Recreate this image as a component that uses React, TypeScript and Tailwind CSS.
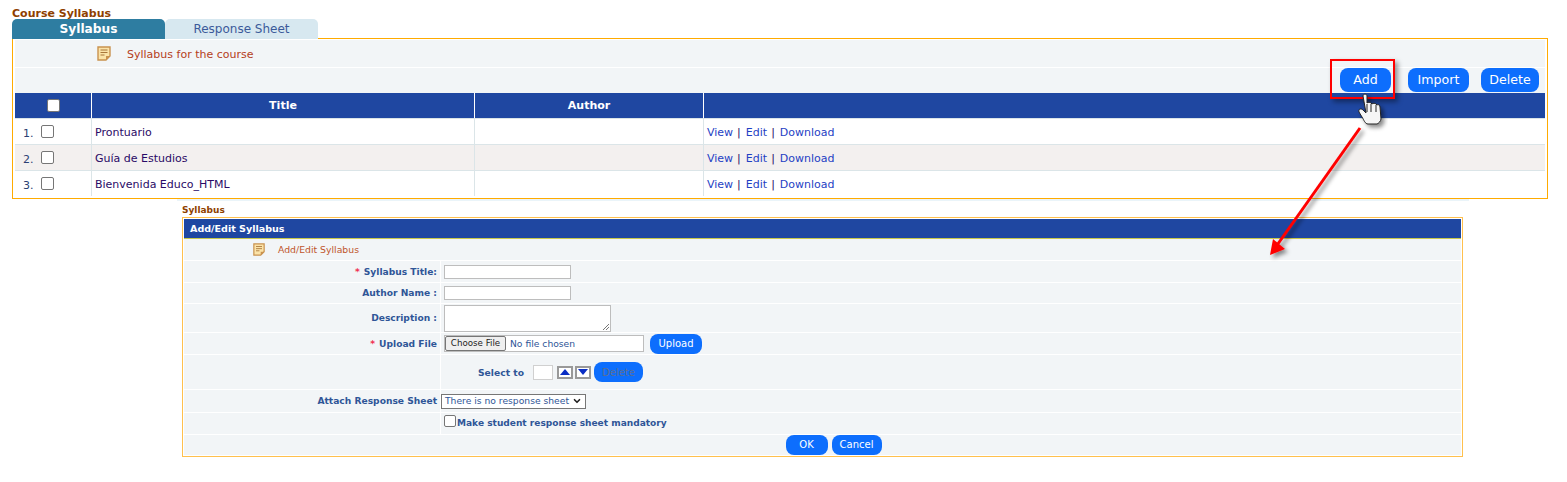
import { ChevronDown } from "lucide-react";
import type { ReactNode } from "react";

const rows = [
  { n: "1.", title: "Prontuario", bg: "bg-white" },
  { n: "2.", title: "Guía de Estudios", bg: "bg-[#f3f0ef]" },
  { n: "3.", title: "Bienvenida Educo_HTML", bg: "bg-white" },
];

function NoteIcon({ size = 14 }: { size?: number }) {
  return (
    <svg width={size} height={size + 1} viewBox="0 0 14 15">
      <path d="M1 1h12v9l-4 4H1z" fill="#fbe3a8" stroke="#c9924f" strokeWidth="1.4" />
      <path d="M9 14v-4h4z" fill="#c9924f" />
      <path d="M3.500 4h7M3.500 6.500h7M3.500 9h4" stroke="#a8763a" strokeWidth="1" />
    </svg>
  );
}

function BlueButton({ children, className }: { children: ReactNode; className: string }) {
  return (
    <button className={`flex items-center justify-center rounded-[8px] bg-[#0d6efd] text-white ${className}`}>
      {children}
    </button>
  );
}

function Check({ className = "" }: { className?: string }) {
  return <span className={`block size-[13px] rounded-[2px] border border-[#767676] bg-white ${className}`} />;
}

function FormRow({
  label,
  star,
  height,
  children,
}: {
  label?: string;
  star?: boolean;
  height: string;
  children?: ReactNode;
}) {
  return (
    <div className={`mb-px flex bg-[#f2f5f7] ${height}`}>
      <div className="flex w-[256px] shrink-0 items-center justify-end pr-[3px] pt-[2px] text-[9.15px] font-bold text-[#2f5597]">
        {star && <span className="mr-[4px] text-[#f03050]">*</span>}
        {label}
      </div>
      <div className="flex flex-1 items-center border-l border-white pl-[3px] text-[9.2px]">{children}</div>
    </div>
  );
}

function CourseTable() {
  return (
    <div className="ml-[12px] mt-[-1px] h-[161px] w-[1536px] border border-[#ffab00] pl-[2px] pr-[2px] pt-px">
      <div className="flex h-[27px] items-center bg-[#f2f5f7] text-[11px] text-[#b5401c]">
        <span className="ml-[82px] w-[30px]"><NoteIcon /></span>
        <span className="mt-[4px]">Syllabus for the course</span>
      </div>
      <div className="mt-px flex h-[25px] items-start justify-end gap-[12px] bg-[#f2f5f7] pr-[6px] text-[12.6px]">
        <BlueButton className="mr-[5px] h-[24px] w-[51px]">Add</BlueButton>
        <BlueButton className="h-[24px] w-[61px]">Import</BlueButton>
        <BlueButton className="h-[24px] w-[58px]">Delete</BlueButton>
      </div>
      <div className="grid h-[25px] grid-cols-[76px_383px_229px_1fr] bg-[#1f47a1] text-[11px] font-bold text-white">
        <div className="flex items-center justify-center"><Check /></div>
        <div className="flex items-center justify-center border-l border-white pt-px">Title</div>
        <div className="flex items-center justify-center border-l border-white pt-px">Author</div>
        <div className="border-l border-white" />
      </div>
      {rows.map((row) => (
        <div
          key={row.n}
          className={`grid h-[26px] grid-cols-[76px_383px_229px_1fr] border-t border-[#dbe5e8] text-[11px] ${row.bg}`}
        >
          <div className="flex items-center pl-[8px] text-[#2b3f73]">
            <span className="mt-[5px] w-[18px]">{row.n}</span>
            <Check className="mt-[-1px]" />
          </div>
          <div className="flex items-center border-l border-[#dbe5e8] pl-[3px] pt-[4px] text-[#2a0a66]">{row.title}</div>
          <div className="border-l border-[#dbe5e8]" />
          <div className="flex items-center border-l border-[#dbe5e8] pl-[3px] pt-[4px] text-[#1f3fc4]">
            View<span className="ml-[4px] mr-[5px] text-[#2a0a66]">|</span>Edit<span className="ml-[4px] mr-[5px] text-[#2a0a66]">|</span>Download
          </div>
        </div>
      ))}
    </div>
  );
}

function SyllabusForm() {
  return (
    <div className="ml-[182px] w-[1281px] border border-[#ffc04d] px-[1px] pt-[1px] text-[10px]">
      <div className="flex h-[20px] items-center border-b border-[#c8c84a] bg-[#1f47a1] pl-[6px] pt-[2px] text-[9.55px] font-bold text-white">
        Add/Edit Syllabus
      </div>
      <div className="mb-px flex h-[21px] items-center bg-[#f2f5f7] text-[9.3px] text-[#c0562d]">
        <span className="ml-[69px] w-[25px]"><NoteIcon size={12} /></span>
        Add/Edit Syllabus
      </div>
      <FormRow label="Syllabus Title:" star height="h-[21px]">
        <span className="h-[14px] w-[127px] border border-[#bdbdbd] bg-white" />
      </FormRow>
      <FormRow label="Author Name :" height="h-[20px]">
        <span className="h-[14px] w-[127px] border border-[#bdbdbd] bg-white" />
      </FormRow>
      <FormRow label="Description :" height="h-[28px]">
        <span className="relative h-[27px] w-[167px] border border-[#bdbdbd] bg-white">
          <svg className="absolute bottom-0 right-0" width="8" height="8" viewBox="0 0 8 8">
            <path d="M7 1 1 7M7 4 4 7" stroke="#777" />
          </svg>
        </span>
      </FormRow>
      <FormRow label="Upload File" star height="h-[21px]">
        <span className="flex h-[17px] w-[200px] items-center whitespace-nowrap border border-[#bdbdbd] bg-white text-[#2f5597]">
          <span className="mr-[4px] flex h-full w-[61px] items-center justify-center rounded-[2px] border border-[#767676] bg-[#efefef] text-[8.7px] text-[#222]">
            Choose File
          </span>
          No file chosen
        </span>
        <BlueButton className="ml-[6px] h-[20px] w-[52px] text-[10px]">Upload</BlueButton>
      </FormRow>
      <FormRow height="h-[34px]">
        <span className="ml-[34px] mr-[9px] pt-[1px] font-bold text-[#2f5597]">Select to</span>
        <span className="h-[15px] w-[20px] border border-[#d0d0d0] bg-white" />
        <span className="ml-[4px] flex h-[13px] w-[16px] items-center justify-center border-2 border-[#999] bg-white">
          <span className="h-0 w-0 border-x-[5px] border-b-[6px] border-x-transparent border-b-[#0a2ec4]" />
        </span>
        <span className="ml-[2px] flex h-[13px] w-[16px] items-center justify-center border-2 border-[#999] bg-white">
          <span className="h-0 w-0 border-x-[5px] border-t-[6px] border-x-transparent border-t-[#0a2ec4]" />
        </span>
        <BlueButton className="ml-[3px] h-[20px] w-[49px] text-[10px] !text-[#5c6f8f]">Delete</BlueButton>
      </FormRow>
      <FormRow label="Attach Response Sheet" height="h-[22px]">
        <span className="ml-[-3px] flex h-[15px] w-[145px] items-center justify-between whitespace-nowrap border border-[#767676] bg-white pl-[3px] pr-[3px] text-[#2f5597]">
          There is no response sheet
          <ChevronDown size={10} strokeWidth={4} className="text-[#222]" />
        </span>
      </FormRow>
      <FormRow height="h-[21px]">
        <Check className="mr-[1px] mt-[-5px] !size-[12px]" />
        <span className="text-[9.05px] font-bold text-[#2f5597]">Make student response sheet mandatory</span>
      </FormRow>
      <div className="flex h-[20px] items-center justify-center gap-[4px] bg-[#f2f5f7] pb-px pl-[22px]">
        <BlueButton className="h-[20px] w-[42px] text-[10px]">OK</BlueButton>
        <BlueButton className="h-[20px] w-[50px] text-[10px]">Cancel</BlueButton>
      </div>
      <div className="h-px" />
    </div>
  );
}

export default function App() {
  return (
    <div className="relative h-[482px] w-[1567px] overflow-hidden bg-white pt-[8px] font-['DejaVu_Sans',Verdana,sans-serif]">
      <div className="ml-[12px] h-[11px] text-[11px] font-bold leading-[11px] text-[#8f3f00]">Course Syllabus</div>
      <div className="ml-[12px] flex h-[20px] text-[12px]">
        <div className="flex w-[153px] items-center justify-center rounded-t-[5px] bg-[#2e7da1] text-[12.2px] font-bold text-white">
          Syllabus
        </div>
        <div className="flex w-[153px] items-center justify-center rounded-t-[5px] bg-[#d7e8f0] text-[#3b5a9a]">
          Response Sheet
        </div>
      </div>
      <CourseTable />
      <div className="ml-[177px] h-[2px] w-[1292px] bg-[#eaf4f9]" />
      <div className="ml-[182px] mt-[3px] h-[13px] text-[9px] font-bold leading-[13px] text-[#8f3f00]">Syllabus</div>
      <SyllabusForm />

      {/* callout drawn over the page: red box, pointer and arrow */}
      <div className="absolute left-[1330px] top-[59px] h-[40px] w-[65px] border-[2px] border-[#ff0000] shadow-[3px_3px_5px_rgba(0,0,0,0.4)]" />
      <svg className="absolute left-[1250px] top-[90px]" width="160" height="175" viewBox="0 0 160 175">
        <defs>
          <filter id="shadow" x="-30%" y="-30%" width="160%" height="160%">
            <feDropShadow dx="3" dy="3" stdDeviation="2" floodColor="#000" floodOpacity="0.45" />
          </filter>
        </defs>
        <g filter="url(#shadow)">
          <path d="M110 38 25 158" stroke="#ff0000" strokeWidth="3" />
          <path d="M20 165 23 149 35 159z" fill="#ff0000" />
        </g>
        <g filter="url(#shadow)">
          <path
            d="M113 6c0-2.500 4-2.500 4 0v7c1-1 3-1 4 0l1 1c1-1 3-1 4 0l1 1c1-1 3 0 3 2l1 12c0 2-3 5-4 5h-9c-3 0-4-4-6-7l-3-5c-1-3 2-4 4-2l3 3z"
            fill="#f6f6f6"
            stroke="#222"
            strokeWidth="1"
          />
          <path d="M117 14v8M121 14v8M126 15v7" stroke="#222" strokeWidth="1" />
        </g>
      </svg>
    </div>
  );
}
